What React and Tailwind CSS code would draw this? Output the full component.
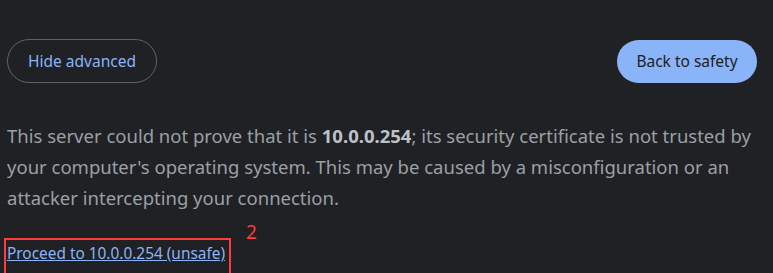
const App = () => {
  return (
    <div className="w-[773px] h-[273px] overflow-hidden bg-[#202124] font-['Noto_Sans',sans-serif]">
      {/* Buttons row */}
      <div className="flex items-center justify-between pt-[39px] pl-[7px] pr-[16px]">
        <button className="h-[44px] w-[150px] pt-[2px] rounded-full border border-[#5f6368] text-[#8ab4f8] text-[15.5px]">
          Hide advanced
        </button>
        <button className="h-[43px] w-[140px] pt-[2px] rounded-full bg-[#8ab4f8] text-[#202124] text-[15.5px]">
          Back to safety
        </button>
      </div>

      {/* Explanation */}
      <p className="mt-[37px] pl-[7px] text-[18.5px] leading-[31px] text-[#9aa0a6]">
        This server could not prove that it is <b className="text-[#bdc1c6]">10.0.0.254</b>; its security certificate is not trusted by
        <br />
        your computer's operating system. This may be caused by a misconfiguration or an
        <br />
        attacker intercepting your connection.
      </p>

      {/* Proceed link */}
      <div className="relative mt-[28px] pl-[7px] leading-[24px]">
        <a href="#" className="text-[15.4px] text-[#8ab4f8] underline">
          Proceed to 10.0.0.254 (unsafe)
        </a>
        <div className="absolute left-[4px] top-[-3px] w-[227px] h-[44px] border-2 border-[#ff3b3b]" />
        <span className="absolute left-[246px] top-[-21px] text-[19px] leading-[24px] text-[#ff3b3b]">2</span>
      </div>
    </div>
  );
};

export default App;
